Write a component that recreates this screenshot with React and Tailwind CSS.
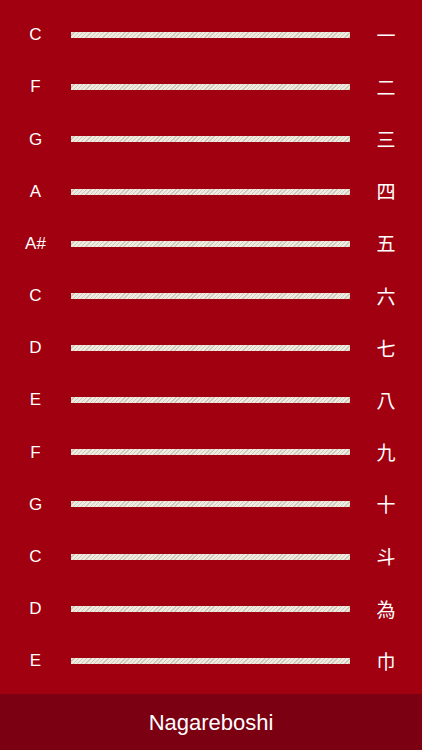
import React from 'react'

const strings = [
    ['C', '一'],
    ['F', '二'],
    ['G', '三'],
    ['A', '四'],
    ['A#', '五'],
    ['C', '六'],
    ['D', '七'],
    ['E', '八'],
    ['F', '九'],
    ['G', '十'],
    ['C', '斗'],
    ['D', '為'],
    ['E', '巾'],
]

function App() {
    return (
        <div className="w-[422px] h-[750px] flex flex-col bg-[#a0000f] text-white font-['Helvetica','Liberation_Sans',Arial,sans-serif]">
            {/* Strings */}
            <div className="flex-1 flex flex-col pt-[9px] pb-[7px]">
                {strings.map(([note, kanji], i) => (
                    <div key={i} className="flex-1 flex items-center">
                        <div className="w-[71px] text-center text-[17px]">{note}</div>
                        <div className="flex-1 h-[6px] bg-[repeating-linear-gradient(135deg,#efebe1_0px,#efebe1_2px,#cfc8b9_2px,#cfc8b9_3px)]"></div>
                        <div className="w-[72px] text-center text-[19px] font-['Noto_Sans_CJK_JP',sans-serif] font-normal text-white">{kanji}</div>
                    </div>
                ))}
            </div>

            {/* Footer */}
            <div className="h-[56px] bg-[#7a0012] flex items-center justify-center text-[22px]">
                Nagareboshi
            </div>
        </div>
    )
}

export default App
